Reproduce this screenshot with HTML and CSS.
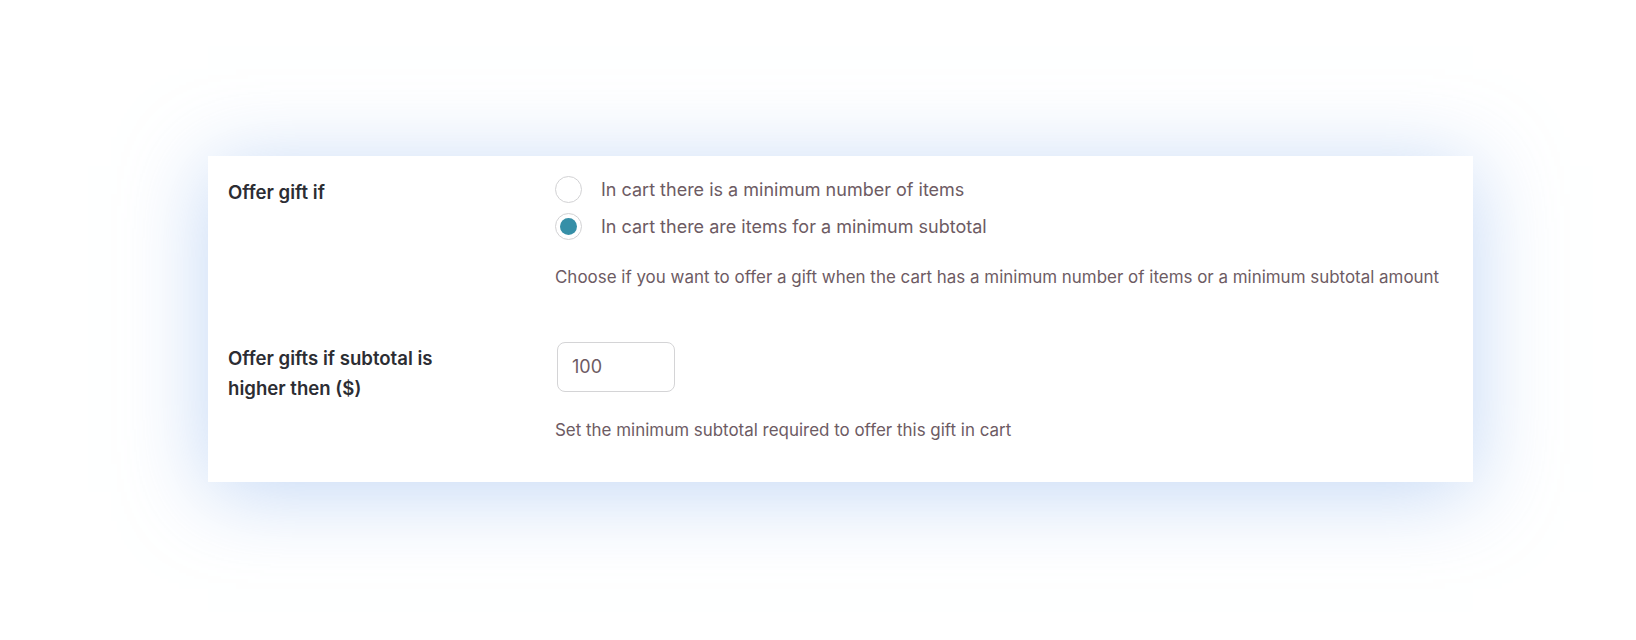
FILE: index.html
```html
<!DOCTYPE html>
<html lang="en">
<head>
<meta charset="utf-8">
<title>Gift settings</title>
<link rel="stylesheet" href="styles.css">
</head>
<body>
<div class="page">
  <div class="card">
    <div class="row row-first">
      <div class="label">Offer gift if</div>
      <div class="field">
        <div class="options">
          <label class="option">
            <span class="radio"></span>
            <span class="option-text">In cart there is a minimum number of items</span>
          </label>
          <label class="option">
            <span class="radio radio-checked"><span class="dot"></span></span>
            <span class="option-text">In cart there are items for a minimum subtotal</span>
          </label>
        </div>
        <p class="desc desc-first">Choose if you want to offer a gift when the cart has a minimum number of items or a minimum subtotal amount</p>
      </div>
    </div>
    <div class="row row-second">
      <div class="label label-wrap">Offer gifts if subtotal is higher then ($)</div>
      <div class="field">
        <div class="input">100</div>
        <p class="desc desc-second">Set the minimum subtotal required to offer this gift in cart</p>
      </div>
    </div>
  </div>
</div>
</body>
</html>
```

FILE: styles.css
```css
html, body {
  margin: 0;
  padding: 0;
  background: #ffffff;
}

body {
  font-family: Inter, "Liberation Sans", sans-serif;
  width: 1636px;
  height: 640px;
  overflow: hidden;
}

.page {
  padding-top: 156px;
  padding-left: 208px;
}

.card {
  width: 1265px;
  height: 326px;
  box-sizing: border-box;
  background: #ffffff;
  box-shadow: 0 10px 80px 0 rgba(165, 196, 240, 0.68);
  padding: 20px 20px 0 20px;
}

.row {
  display: grid;
  grid-template-columns: 327px 1fr;
}

.row-second {
  margin-top: 53px;
}

.label {
  font-size: 18.6px;
  font-weight: 600;
  line-height: 30px;
  color: #2c2d33;
  padding-top: 1px;
}

.label-wrap {
  width: 235px;
}

.field {
  display: flex;
  flex-direction: column;
  align-items: flex-start;
}

.options {
  display: flex;
  flex-direction: column;
  gap: 10px;
}

.option {
  display: flex;
  align-items: center;
  gap: 19px;
  height: 27px;
}

.radio {
  width: 27px;
  height: 27px;
  box-sizing: border-box;
  border: 1px solid #d2d2d4;
  border-radius: 50%;
  background: #ffffff;
  display: flex;
  align-items: center;
  justify-content: center;
}

.dot {
  width: 17px;
  height: 17px;
  border-radius: 50%;
  background: #368fa7;
}

.option-text {
  font-size: 18px;
  color: #6d5b63;
  line-height: 27px;
}

.desc {
  margin: 0;
  font-size: 16.95px;
  line-height: 24px;
  color: #6d5b63;
}

.desc-first {
  margin-top: 25px;
}

.input {
  width: 118px;
  height: 50px;
  box-sizing: border-box;
  border: 1px solid #d4d4d6;
  border-radius: 8px;
  padding-left: 14px;
  font-size: 18px;
  line-height: 48px;
  color: #6d5b63;
  margin-left: 2px;
}

.desc-second {
  margin-top: 26px;
}
```
